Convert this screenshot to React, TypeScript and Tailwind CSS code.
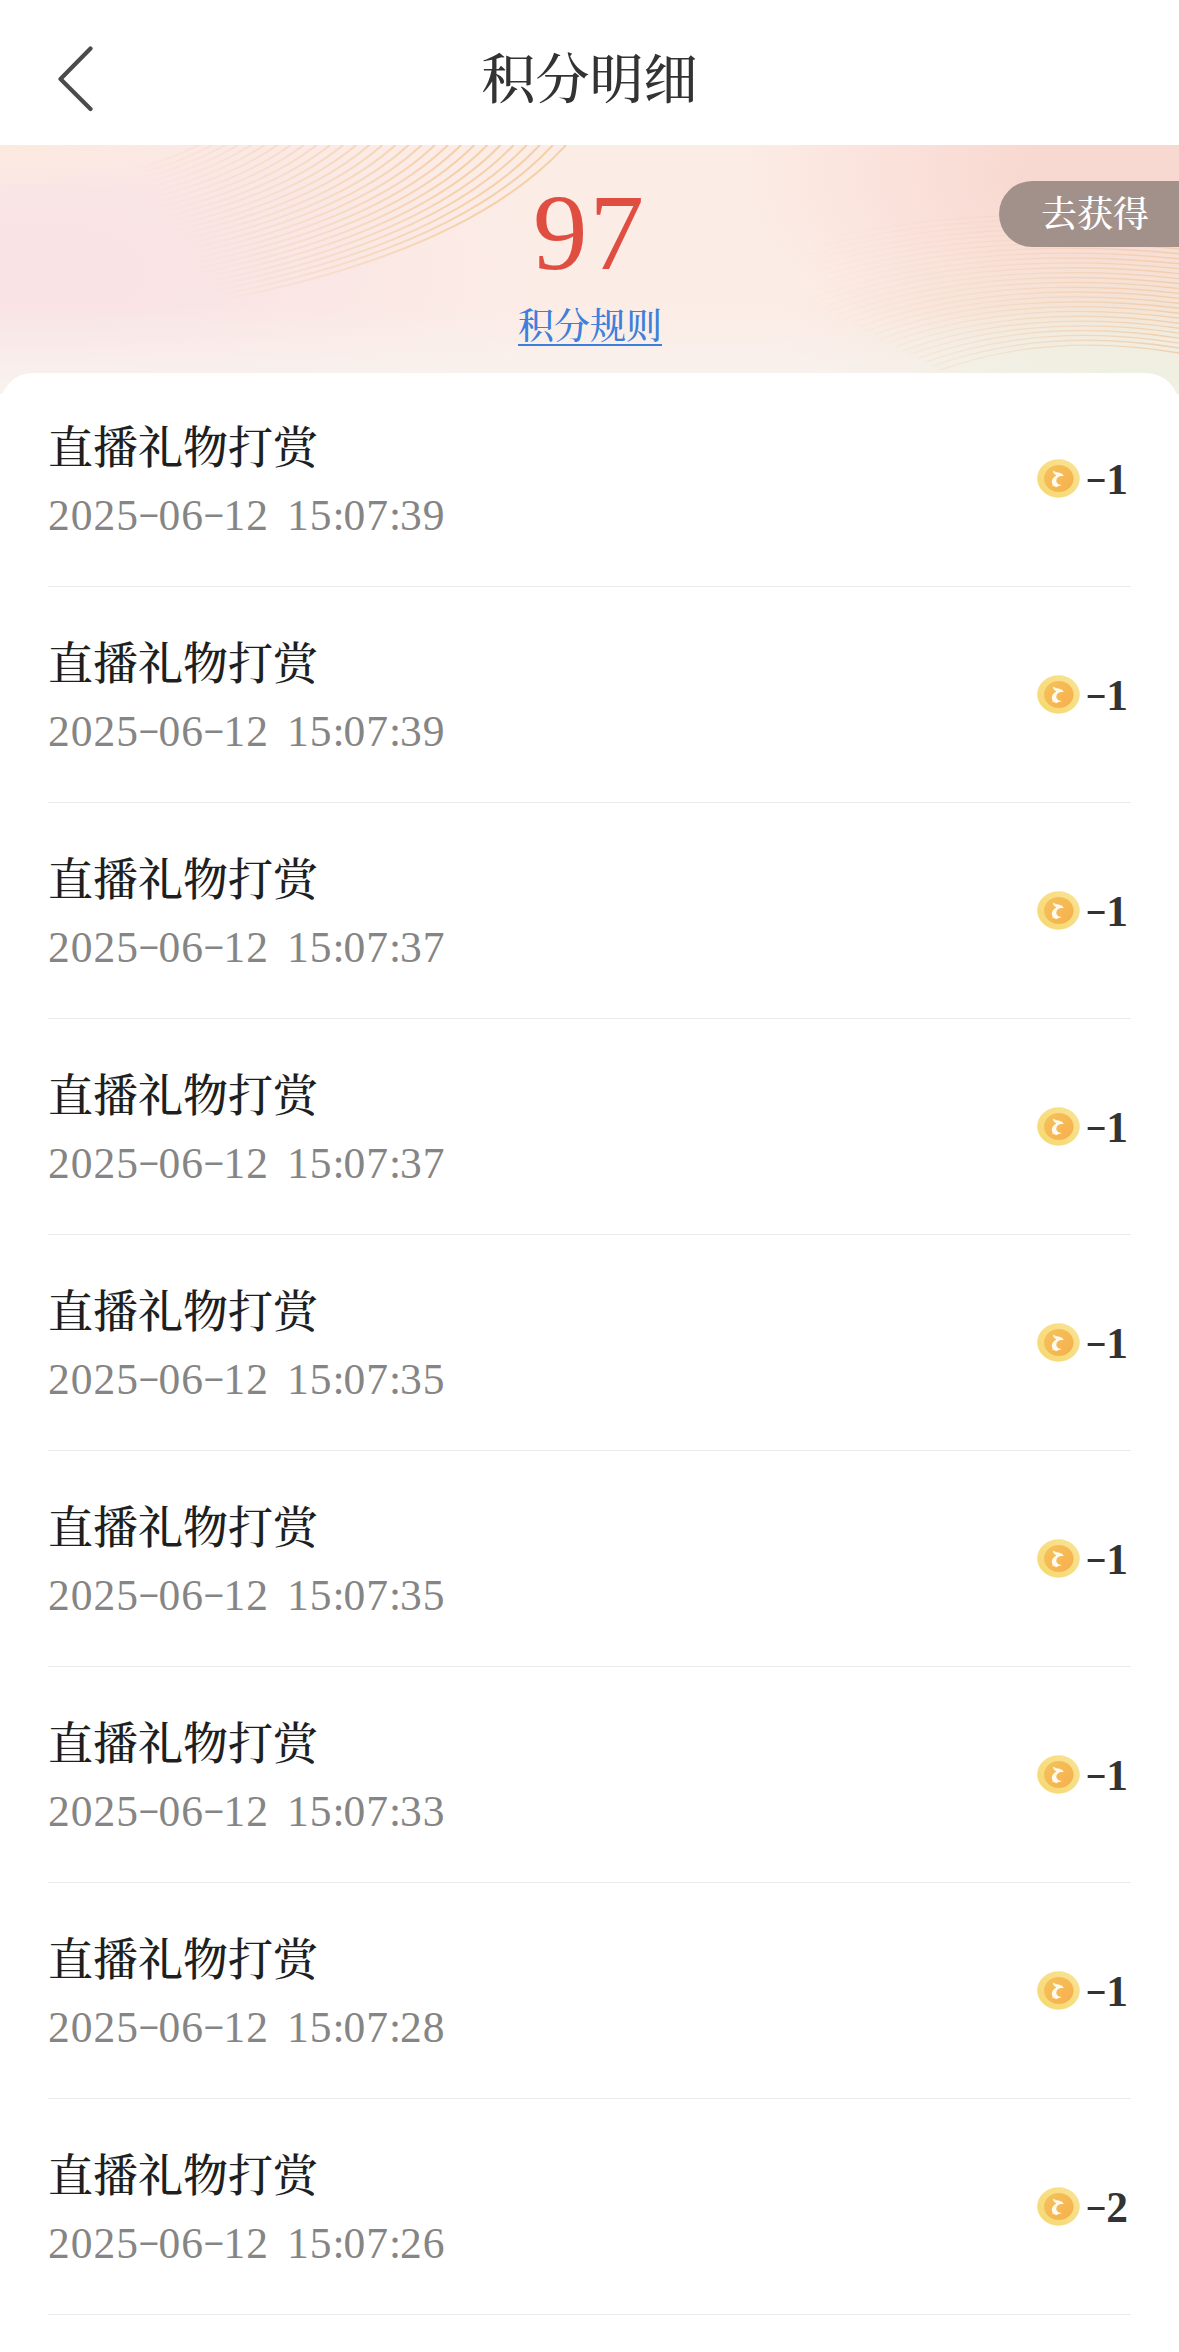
const FONT =
  "font-['Liberation_Serif','Noto_Serif_CJK_SC','Noto_Sans_CJK_SC',serif]";

const records = [
  { time: '2025-06-12 15:07:39', amount: '1' },
  { time: '2025-06-12 15:07:39', amount: '1' },
  { time: '2025-06-12 15:07:37', amount: '1' },
  { time: '2025-06-12 15:07:37', amount: '1' },
  { time: '2025-06-12 15:07:35', amount: '1' },
  { time: '2025-06-12 15:07:35', amount: '1' },
  { time: '2025-06-12 15:07:33', amount: '1' },
  { time: '2025-06-12 15:07:28', amount: '1' },
  { time: '2025-06-12 15:07:26', amount: '2' },
];

const mix = (a: number, b: number, t: number) => (a + (b - a) * t).toFixed(1);

/** Blends two equally long coordinate lists into one. */
const blend = (from: number[], to: number[], t: number) =>
  from.map((v, i) => mix(v, to[i], t));

const LEFT_LINES = Array.from({ length: 29 }, (_, i) => {
  const p = blend([199, 0, 145, 27, 60, 41], [566, 0, 470, 105, 230, 153], i / 28);
  return `M${p[0]} ${p[1]}Q${p[2]} ${p[3]} ${p[4]} ${p[5]}`;
});

const RIGHT_LINES = Array.from({ length: 28 }, (_, i) => {
  const p = blend(
    [740, 120, 850, 77, 1010, 60, 1179, 74],
    [940, 225, 1010, 200, 1090, 193, 1179, 208],
    i / 27,
  );
  return `M${p[0]} ${p[1]}C${p[2]} ${p[3]} ${p[4]} ${p[5]} ${p[6]} ${p[7]}`;
});

function BannerLines() {
  return (
    <svg className="absolute inset-0 h-full w-full" viewBox="0 0 1179 249" fill="none" aria-hidden="true">
      <defs>
        <linearGradient id="fadeLeft" gradientUnits="userSpaceOnUse" x1="190" y1="130" x2="440" y2="-20">
          <stop offset="0" stopColor="#f3c692" stopOpacity="0" />
          <stop offset="0.5" stopColor="#f3c692" stopOpacity="0.38" />
          <stop offset="1" stopColor="#f3c692" stopOpacity="0.75" />
        </linearGradient>
        <linearGradient id="fadeRight" gradientUnits="userSpaceOnUse" x1="800" y1="70" x2="1170" y2="190">
          <stop offset="0" stopColor="#eebd92" stopOpacity="0" />
          <stop offset="0.5" stopColor="#eebd92" stopOpacity="0.18" />
          <stop offset="1" stopColor="#eebd92" stopOpacity="0.6" />
        </linearGradient>
      </defs>
      <g stroke="url(#fadeLeft)" strokeWidth="2">
        {LEFT_LINES.map((d) => <path key={d} d={d} />)}
      </g>
      <g stroke="url(#fadeRight)" strokeWidth="1.4">
        {RIGHT_LINES.map((d) => <path key={d} d={d} />)}
      </g>
    </svg>
  );
}

function Coin() {
  return (
    <svg className="h-[39px] w-[43px]" viewBox="0 0 43 39" aria-hidden="true">
      <defs>
        <linearGradient id="rim" x1="0" y1="1" x2="1" y2="0">
          <stop offset="0" stopColor="#f6d870" />
          <stop offset="1" stopColor="#f9e294" />
        </linearGradient>
        <linearGradient id="face" x1="0" y1="0" x2="1" y2="1">
          <stop offset="0" stopColor="#f5c25c" />
          <stop offset="1" stopColor="#f5b04c" />
        </linearGradient>
      </defs>
      <ellipse cx="21.5" cy="19.5" rx="21.3" ry="19.2" fill="url(#rim)" />
      <ellipse cx="21.8" cy="19.5" rx="14.8" ry="13.5" fill="url(#face)" />
      <path
        d="M16 11.500c1.400 1.300 3.200 1.600 5.200 2 3 .5 5 1.700 5.500 3.600-3.800-.6-6.700.7-7.300 3.600-.5 2.800 1.300 4.900 5.900 5.400-1.600.9-3.400 1.200-5.300 1.100.3.400.7.700 1.200.9-2.200.2-3.700-.3-4.600-1.300-.7.100-1.300 0-1.900-.3.500-.1.800-.3 1-.7-2.200-3.400-.4-7.500 4-9.400-2.200-.7-3.900-2.400-3.700-4.900z"
        fill="#fff9f0"
      />
    </svg>
  );
}

/** Sets dates with wide raised dashes and tight colons. */
function TimeText({ value }: { value: string }) {
  return (
    <p className="h-[60px] whitespace-pre text-[43.5px] leading-[60px] tracking-[1px] text-[#858585] [word-spacing:6px]">
      {value.split(/([-:])/).map((part, i) =>
        part === '-' ? (
          <span key={i} className="relative -top-[2px] inline-block w-[19.5px] scale-x-150 scale-y-75 text-center tracking-normal">-</span>
        ) : part === ':' ? (
          <span key={i} className="inline-block w-[11px] text-center tracking-normal">:</span>
        ) : (
          part
        ),
      )}
    </p>
  );
}

export default function App() {
  return (
    <div className={`h-[2352px] w-[1179px] overflow-hidden bg-white ${FONT}`}>
      <header className="grid h-[145px] grid-cols-[180px_1fr_180px] items-center pt-3">
        <button className="pl-[57px]" aria-label="返回">
          <svg className="h-[66px] w-[38px]" viewBox="0 0 38 66" fill="none" stroke="#4b4b4b" strokeWidth="4.2" strokeLinecap="round" strokeLinejoin="round">
            <path d="M33.5 2.500 3.500 33 33.500 63" />
          </svg>
        </button>
        <h1 className="pt-1 text-center text-[54px] leading-[72px] font-medium text-[#333333]">积分明细</h1>
      </header>

      <section className="relative h-[249px] bg-[#fcece6] bg-[radial-gradient(ellipse_320px_80px_at_1130px_232px,#eef0e1_0%,#eef0e100_100%),linear-gradient(to_bottom,#f8f2ef00_65%,#f8f2ef_98%),radial-gradient(ellipse_380px_110px_at_1150px_190px,#f3e2d0_0%,#f3e2d000_100%),radial-gradient(ellipse_370px_190px_at_1110px_30px,#f8d9d1_25%,#f8d9d100_100%),radial-gradient(ellipse_280px_50px_at_0px_0px,#fceae0_0%,#fceae000_100%),radial-gradient(ellipse_500px_220px_at_40px_125px,#f9e3e5_20%,#f9e3e500_100%)]">
        <BannerLines />
        <div className="relative flex flex-col items-center pt-10">
          <strong className="h-[98px] text-[109px] leading-[96px] font-normal tracking-[2px] text-[#e04e42]">97</strong>
          <a className="mt-[15px] ml-px h-[48px] border-b-2 border-[#3f7fdc] text-[36px] leading-[58px] font-medium text-[#3f7fdc]">积分规则</a>
        </div>
        <button className="absolute top-9 right-0 h-[66px] w-[180px] rounded-l-full bg-[#9f8e88]/97 pt-[2px] pl-[42px] text-left text-[36px] leading-[64px] font-medium text-white">
          去获得
        </button>
      </section>

      <main className="relative -mt-[21px] flow-root rounded-t-[33px] bg-white px-12">
        <ul className="-mt-[2px]">
          {records.map((record, i) => (
            <li key={i} className="flex h-[216px] items-center justify-between border-b border-[#ebebeb]">
              <div className="pt-[3px]">
                <h2 className="h-[70px] text-[45px] leading-[68px] font-medium text-[#1f1f1f]">直播礼物打赏</h2>
                <TimeText value={record.time} />
              </div>
              <div className="flex items-center gap-[6px]">
                <Coin />
                <span className="flex pr-[3px] text-[43.5px] leading-[60px] font-bold text-[#333333]">
                  <span className="relative -top-[3px] w-5 scale-x-150 scale-y-90 text-center font-normal">-</span>
                  <span>{record.amount}</span>
                </span>
              </div>
            </li>
          ))}
        </ul>
      </main>
    </div>
  );
}
